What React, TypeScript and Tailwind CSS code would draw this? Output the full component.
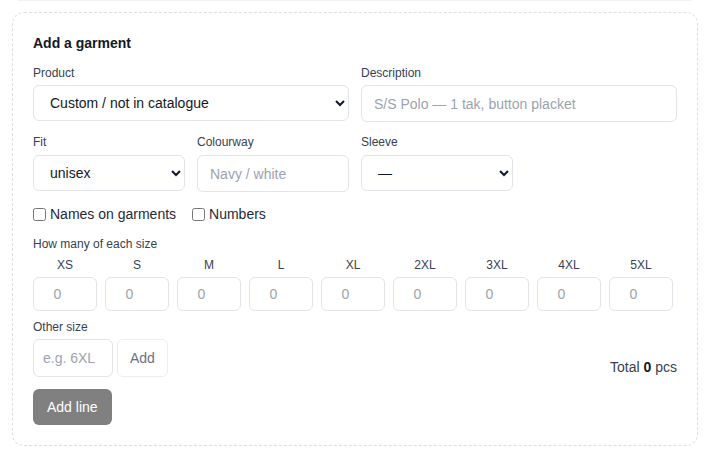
import React from "react";

const sizes = ["XS", "S", "M", "L", "XL", "2XL", "3XL", "4XL", "5XL"];

export default function App() {
  return (
    <div className="w-[710px] h-[458px] bg-white font-['Liberation_Sans',Arial,sans-serif] relative">
      <div className="absolute top-0 left-[18px] right-[18px] h-px bg-[#f2f2f2]" />
      <div className="p-3">
        <div className="border border-dashed border-[#dedede] rounded-xl p-5">
          <div className="text-sm font-bold leading-5 text-[#111827] mb-[11px]">Add a garment</div>

          <div className="grid grid-cols-2 gap-x-3">
            <div className="flex flex-col">
              <label className="text-xs leading-4 text-[#374151] mb-1 pt-px">Product</label>
              <select className="h-9 w-full border border-[#e2e4ea] rounded-md bg-white pl-3 pr-2 text-sm text-[#111827]">
                <option>Custom / not in catalogue</option>
              </select>
            </div>
            <div className="flex flex-col">
              <label className="text-xs leading-4 text-[#374151] mb-1 pt-px">Description</label>
              <input
                className="h-[37px] w-full border border-[#e2e4ea] rounded-md bg-white px-3 text-sm text-[#111827] placeholder:text-[#9ca3af] outline-none"
                placeholder="S/S Polo — 1 tak, button placket"
              />
            </div>
          </div>

          <div className="grid grid-cols-4 gap-x-3 mt-3">
            <div className="flex flex-col">
              <label className="text-xs leading-4 text-[#374151] mb-[5px]">Fit</label>
              <select className="h-9 w-full border border-[#e2e4ea] rounded-md bg-white pl-3 pr-2 text-sm text-[#111827]">
                <option>unisex</option>
              </select>
            </div>
            <div className="flex flex-col">
              <label className="text-xs leading-4 text-[#374151] mb-[5px]">Colourway</label>
              <input
                className="h-[37px] w-full border border-[#e2e4ea] rounded-md bg-white px-3 text-sm text-[#111827] placeholder:text-[#9ca3af] outline-none"
                placeholder="Navy / white"
              />
            </div>
            <div className="flex flex-col">
              <label className="text-xs leading-4 text-[#374151] mb-[5px]">Sleeve</label>
              <select className="h-9 w-full border border-[#e2e4ea] rounded-md bg-white pl-3 pr-2 text-sm text-[#111827]">
                <option>—</option>
              </select>
            </div>
          </div>

          <div className="flex items-center gap-4 mt-3 h-5 text-sm text-[#1f2937]">
            <label className="flex items-center gap-1">
              <input type="checkbox" className="w-[13px] h-[13px]" />
              <span>Names on garments</span>
            </label>
            <label className="flex items-center gap-1">
              <input type="checkbox" className="w-[13px] h-[13px]" />
              <span>Numbers</span>
            </label>
          </div>

          <div className="text-xs leading-4 text-[#374151] mt-3">How many of each size</div>
          <div className="flex gap-2 mt-1 pt-px">
            {sizes.map((s) => (
              <div key={s} className="flex flex-col w-16">
                <div className="text-xs leading-4 text-[#374151] text-center">{s}</div>
                <input
                  type="number"
                  className="mt-1 h-[34px] w-16 border border-[#e2e4ea] rounded-md bg-white px-2 text-sm text-center placeholder:text-[#9ca3af] outline-none"
                  placeholder="0"
                />
              </div>
            ))}
          </div>

          <div className="text-xs leading-4 text-[#374151] mt-2">Other size</div>
          <div className="flex items-end justify-between mt-1">
            <div className="flex gap-1">
              <input
                className="h-[38px] w-20 border border-[#e2e4ea] rounded-md bg-white pl-[9px] pr-2 text-sm placeholder:text-[#9ca3af] outline-none"
                placeholder="e.g. 6XL"
              />
              <button className="h-[38px] px-3 border border-[#ededed] rounded-md bg-white text-sm text-[#6b7280]">Add</button>
            </div>
            <div className="text-sm leading-5 text-[#374151]">
              Total <b className="font-bold text-[#111827]">0</b> pcs
            </div>
          </div>

          <button className="mt-3 h-9 px-[14px] rounded-md bg-[#808080] text-sm text-white">Add line</button>
        </div>
      </div>
    </div>
  );
}
